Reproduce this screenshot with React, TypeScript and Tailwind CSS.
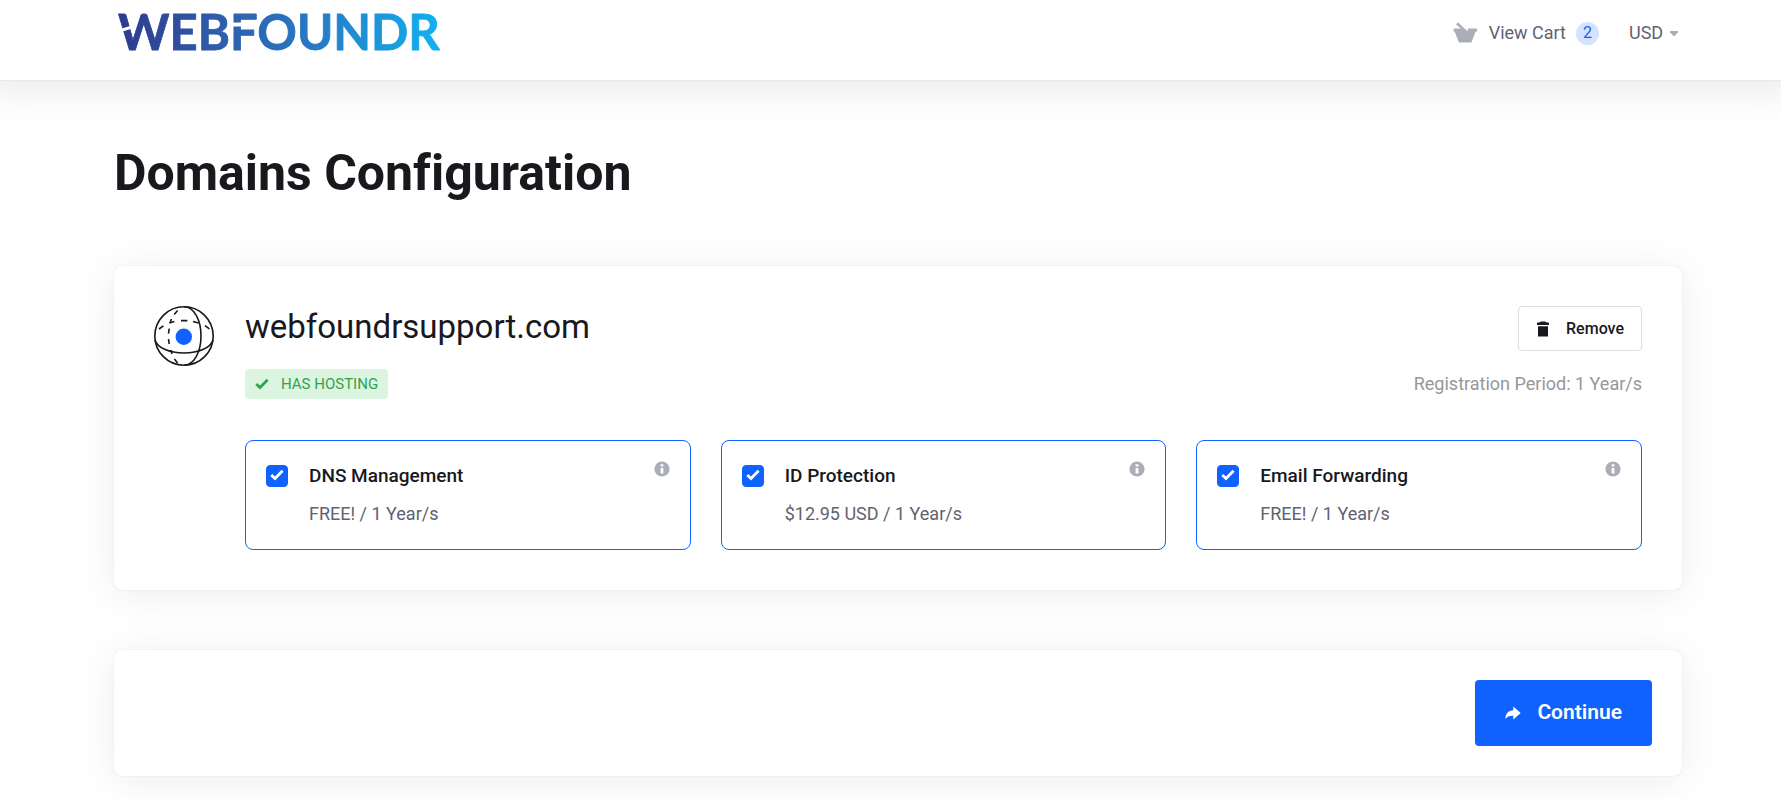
import React, { useState } from 'react';

interface Addon {
  id: string;
  name: string;
  price: string;
}

const addons: Addon[] = [
  { id: 'dns', name: 'DNS Management', price: 'FREE! / 1 Year/s' },
  { id: 'idprotect', name: 'ID Protection', price: '$12.95 USD / 1 Year/s' },
  { id: 'email', name: 'Email Forwarding', price: 'FREE! / 1 Year/s' }
];

const Logo: React.FC = () => (
  <svg width="340" height="66" viewBox="0 0 340 66" role="img" aria-label="WebFoundr">
    <defs>
      <linearGradient id="logo-fill" gradientUnits="userSpaceOnUse" x1="4" y1="0" x2="328" y2="0">
        <stop offset="0" stopColor="#2e3a8c" />
        <stop offset="0.3" stopColor="#2f5cab" />
        <stop offset="0.6" stopColor="#2779c4" />
        <stop offset="1" stopColor="#10b2f2" />
      </linearGradient>
    </defs>
    <text
      x="4"
      y="50"
      fill="url(#logo-fill)"
      stroke="url(#logo-fill)"
      strokeWidth="0.8"
      strokeLinejoin="round"
      className="font-['Lato',sans-serif] text-[49px] font-bold"
    >
      WEBFOUNDR
    </text>
    {/* stencil gaps in the W and the F */}
    <path d="M5 31 16.500 27.500" stroke="#fff" strokeWidth="3" />
    <path d="M116 24.500H129" stroke="#fff" strokeWidth="4" />
  </svg>
);

const CartIcon: React.FC = () => (
  <svg width="24" height="22" viewBox="0 0 24 22" fill="#abaeba" aria-hidden="true">
    <path d="M3 2.200 5.200 0.400 14.800 9.400V6.600H24V9.600H22.600L18.400 20.600H6L1.600 9.600H0.600V6.600H7.800Z" />
  </svg>
);

const GlobeIcon: React.FC = () => (
  <svg width="60" height="60" viewBox="0 0 60 60" fill="none" stroke="#17191d" strokeWidth="1.6" aria-hidden="true">
    <circle cx="30" cy="30" r="29.2" />
    <path d="M30 .8C40 .8 47 14 47 30S40 59.2 30 59.2" />
    <path d="M1 34C3 41.500 15 47 30 47S57 41.500 59 34" />
    <path d="M23.600 4.400 20.200 8.400M17.400 13 16 17M15.200 22.600 14.500 27.600M14.500 33 15.200 38M16.800 44 18 48M20.400 53 23.600 57" />
    <path d="M5 23 9.400 19.800M15.400 17 20.400 15.400M27 14.600H33.400M39 15.400 44.400 17M51 19.600 55.400 22.800" />
    <circle cx="29.800" cy="30.800" r="8.200" fill="#0f62fe" stroke="none" />
  </svg>
);

const CheckIcon: React.FC<{ className?: string }> = ({ className }) => (
  <svg width="14" height="12" viewBox="0 0 14 12" fill="none" stroke="currentColor" strokeWidth="2.800" className={className} aria-hidden="true">
    <path d="M1.300 6 5 9.500 12.600 1.800" />
  </svg>
);

const TrashIcon: React.FC = () => (
  <svg width="14" height="16" viewBox="0 0 14 16" fill="#17191d" aria-hidden="true">
    <path d="M1 4V2.200Q1 1.600 2 1.500L4 1.300Q4.300.6 5 .6H9Q9.700.6 10 1.300L12 1.500Q13 1.600 13 2.200V4ZM2 5.200H12V15.600H2Z" />
  </svg>
);

const InfoIcon: React.FC = () => (
  <svg width="16" height="16" viewBox="0 0 16 16" aria-hidden="true">
    <circle cx="8" cy="8" r="7.600" fill="#abaeba" />
    <path d="M6.600 3.200H9.400V5.400H6.600ZM6.600 7H9.400V12.600H6.600Z" fill="#fff" />
  </svg>
);

const ShareIcon: React.FC = () => (
  <svg width="16" height="14" viewBox="0 0 16 14" fill="currentColor" aria-hidden="true">
    <path d="M8.300.6 15.700 7 8.300 13.500V9.800C4.800 9.600 2.300 10.600.4 13 .4 8 3.200 4.400 8.300 4.200Z" />
  </svg>
);

const AddonCard: React.FC<{ addon: Addon; checked: boolean; onToggle: () => void }> = ({ addon, checked, onToggle }) => (
  <div className={`flex items-start rounded-lg border px-5 pt-4 pb-5 ${checked ? 'border-[#0f62fe]' : 'border-gray-300'}`}>
    <div className="relative mt-2 size-[22px] shrink-0">
      <input
        id={addon.id}
        type="checkbox"
        checked={checked}
        onChange={onToggle}
        className="peer block size-[22px] cursor-pointer appearance-none rounded border border-gray-300 checked:border-[#0f62fe] checked:bg-[#0f62fe]"
      />
      <CheckIcon className="pointer-events-none absolute top-1 left-1 hidden text-white peer-checked:block" />
    </div>
    <div className="ml-[21px] flex-1">
      <label htmlFor={addon.id} className="mt-1 block cursor-pointer text-[19px] leading-[30px] font-medium text-[#17191d]">
        {addon.name}
      </label>
      <p className="mt-2 text-lg leading-[30px] text-[#5f6371]">{addon.price}</p>
    </div>
    <button type="button" aria-label={`About ${addon.name}`} className="mt-1 cursor-pointer">
      <InfoIcon />
    </button>
  </div>
);

const App: React.FC = () => {
  const [selected, setSelected] = useState<string[]>(addons.map((addon) => addon.id));
  const [currency, setCurrency] = useState('USD');

  const toggleAddon = (id: string) => {
    setSelected(prev => (prev.includes(id) ? prev.filter(item => item !== id) : [...prev, id]));
  };

  return (
    <div className="min-h-screen overflow-x-hidden bg-white font-['Roboto',sans-serif] text-[#17191d]">
      <header className="border-b border-[#e9e9e9] bg-white pr-[99px] pb-3.5 pl-[114px] shadow-[0_-30px_50px_30px_rgba(0,0,0,0.12)]">
        <div className="flex h-[66px] items-center justify-between">
          <a href="#home">
            <Logo />
          </a>
          <div className="flex items-center text-lg text-[#5f6371]">
            <a href="#cart" className="flex items-center">
              <CartIcon />
              <span className="ml-3">View Cart</span>
              <span className="ml-2.5 flex size-[23px] items-center justify-center rounded-full bg-[#d6e3ff] text-base text-[#0f62fe]">2</span>
            </a>
            <div className="relative ml-[30px]">
              <select
                aria-label="Currency"
                value={currency}
                onChange={(e) => setCurrency(e.target.value)}
                className="w-[53px] cursor-pointer appearance-none bg-transparent pr-4"
              >
                <option>USD</option>
              </select>
              <svg width="8" height="6" viewBox="0 0 8 6" fill="#abaeba" className="pointer-events-none absolute top-3 right-1" aria-hidden="true">
                <path d="M0 0H8V1.200L4.600 5H3.400L0 1.200Z" />
              </svg>
            </div>
          </div>
        </div>
      </header>

      <main className="pt-[62px] pr-[99px] pb-6 pl-[114px]">
        <h1 className="text-[50px] leading-[60px] font-bold [font-variant-ligatures:none]">Domains Configuration</h1>

        <section className="mt-[63px] flex rounded-lg bg-white p-10 shadow-[0_0_1px_rgba(0,0,0,0.2),0_4px_40px_rgba(0,0,0,0.08)]">
          <div className="shrink-0">
            <GlobeIcon />
          </div>
          <div className="ml-[31px] flex-1">
            <div className="flex items-start justify-between">
              <div>
                <h2 className="text-[33px] leading-[42px]">webfoundrsupport.com</h2>
                <span className="mt-[21px] flex h-[30px] w-fit items-center rounded bg-[#dcf5e1] px-2.5 text-[15px] text-[#2da44e]">
                  <CheckIcon className="mr-3" />
                  HAS HOSTING
                </span>
              </div>
              <div className="flex flex-col items-end">
                <button type="button" className="flex h-[45px] cursor-pointer items-center rounded border border-[#dcdde0] px-[17px] text-base font-medium">
                  <TrashIcon />
                  <span className="ml-4">Remove</span>
                </button>
                <p className="mt-[18px] text-lg leading-[30px] text-[#95979c]">Registration Period: 1 Year/s</p>
              </div>
            </div>

            <div className="mt-[41px] grid grid-cols-3 gap-[30px]">
              {addons.map((addon) => (
                <AddonCard
                  key={addon.id}
                  addon={addon}
                  checked={selected.includes(addon.id)}
                  onToggle={() => toggleAddon(addon.id)}
                />
              ))}
            </div>
          </div>
        </section>

        <section className="mt-[60px] flex justify-end rounded-lg bg-white p-[30px] shadow-[0_0_1px_rgba(0,0,0,0.2),0_4px_40px_rgba(0,0,0,0.08)]">
          <button type="button" className="flex h-[66px] cursor-pointer items-center rounded bg-[#0f62fe] px-[30px] text-[21px] font-semibold text-white">
            <ShareIcon />
            <span className="ml-4">Continue</span>
          </button>
        </section>
      </main>
    </div>
  );
};

export default App;
